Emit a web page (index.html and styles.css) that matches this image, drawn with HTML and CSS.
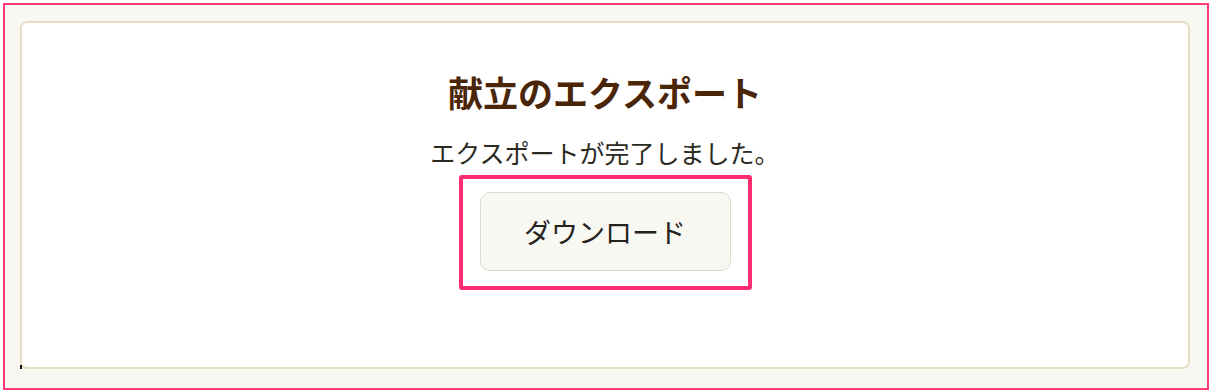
FILE: index.html
```html
<!DOCTYPE html>
<html lang="ja">
<head>
<meta charset="utf-8">
<link rel="stylesheet" href="styles.css">
</head>
<body>
<div class="frame">
  <div class="card">
    <h1 class="title">献立のエクスポート</h1>
    <p class="message">エクスポートが完了しました。</p>
    <div class="highlight">
      <button class="download">ダウンロード</button>
    </div>
    <span class="caret"></span>
  </div>
</div>
</body>
</html>
```
FILE: styles.css
```css
html, body {
  margin: 0;
  padding: 0;
  background: #ffffff;
}
body {
  padding: 3px;
  width: 1212px;
  height: 392px;
  box-sizing: border-box;
  font-family: "Noto Sans CJK JP", "Noto Sans", sans-serif;
}
.frame {
  box-sizing: border-box;
  width: 1206px;
  height: 387px;
  border: 2px solid #ff3a78;
  background: #f8f8f3;
  padding: 16px 17px 19px 15px;
}
.card {
  position: relative;
  box-sizing: border-box;
  height: 100%;
  background: #ffffff;
  border: 2px solid #e6dec4;
  border-radius: 7px;
  display: flex;
  flex-direction: column;
  align-items: center;
  padding-top: 44px;
}
.title {
  margin: 0;
  font-size: 35px;
  line-height: 50px;
  font-weight: 700;
  color: #4a2508;
}
.message {
  margin: 18px 0 0;
  font-size: 25px;
  line-height: 34px;
  color: #2b2a22;
}
.highlight {
  margin-top: 6px;
  border: 4px solid #ff2d6f;
  border-radius: 3px;
  padding: 13px 17px 15px 17px;
  background: #ffffff;
}
.download {
  display: block;
  width: 251px;
  height: 79px;
  box-sizing: border-box;
  border: 1px solid #dcd9cc;
  border-radius: 10px;
  background: #f8f8f3;
  font-family: "Noto Sans CJK JP", "Noto Sans", sans-serif;
  font-size: 27px;
  color: #23221c;
  padding: 0;
}
.caret {
  position: absolute;
  left: -2px;
  bottom: -2px;
  width: 2px;
  height: 4px;
  background: #111;
}
```
